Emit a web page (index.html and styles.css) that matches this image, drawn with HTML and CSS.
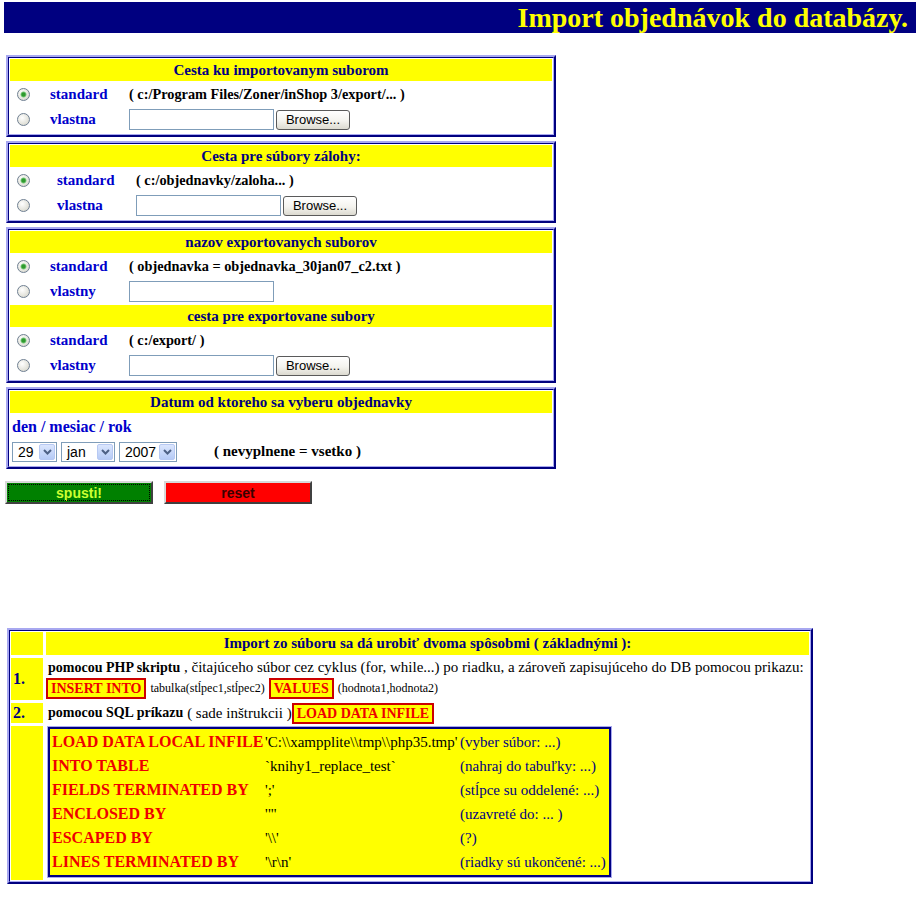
FILE: index.html
```html
<!DOCTYPE html>
<html lang="sk">
<head>
<meta charset="utf-8">
<title>Import objednávok do databázy.</title>
<link rel="stylesheet" href="styles.css">
</head>
<body>
<div class="title">Import objednávok do databázy.</div>

<div class="box">
  <div class="in">
    <div class="cap">Cesta ku importovanym suborom</div>
    <div class="row c1"><input type="radio" class="rb" name="a" checked><span class="lbl">standard</span><span class="val">( c:/Program Files/Zoner/inShop 3/export/... )</span></div>
    <div class="row c1"><input type="radio" class="rb" name="a"><span class="lbl">vlastna</span><span class="val"><input type="text" class="txt"><button class="browse">Browse...</button></span></div>
  </div>
</div>

<div class="box">
  <div class="in">
    <div class="cap">Cesta pre súbory zálohy:</div>
    <div class="row c2"><input type="radio" class="rb" name="b" checked><span class="lbl">standard</span><span class="val">( c:/objednavky/zaloha... )</span></div>
    <div class="row c2"><input type="radio" class="rb" name="b"><span class="lbl">vlastna</span><span class="val"><input type="text" class="txt"><button class="browse">Browse...</button></span></div>
  </div>
</div>

<div class="box">
  <div class="in">
    <div class="cap">nazov exportovanych suborov</div>
    <div class="row c1"><input type="radio" class="rb" name="c" checked><span class="lbl">standard</span><span class="val">( objednavka = objednavka_30jan07_c2.txt )</span></div>
    <div class="row c1"><input type="radio" class="rb" name="c"><span class="lbl">vlastny</span><span class="val"><input type="text" class="txt"></span></div>
    <div class="cap">cesta pre exportovane subory</div>
    <div class="row c1"><input type="radio" class="rb" name="d" checked><span class="lbl">standard</span><span class="val">( c:/export/ )</span></div>
    <div class="row c1"><input type="radio" class="rb" name="d"><span class="lbl">vlastny</span><span class="val"><input type="text" class="txt"><button class="browse">Browse...</button></span></div>
  </div>
</div>

<div class="box">
  <div class="in">
    <div class="cap">Datum od ktoreho sa vyberu objednavky</div>
    <div class="drow lbl">den / mesiac / rok</div>
    <div class="drow sels">
      <span class="sel w1"><span>29</span><span class="arr"><svg width="9" height="6" viewBox="0 0 9 6"><path d="M1 1 L4.5 4.5 L8 1" fill="none" stroke="#4d6185" stroke-width="2"/></svg></span></span>
      <span class="sel w2"><span>jan</span><span class="arr"><svg width="9" height="6" viewBox="0 0 9 6"><path d="M1 1 L4.5 4.5 L8 1" fill="none" stroke="#4d6185" stroke-width="2"/></svg></span></span>
      <span class="sel w3"><span>2007</span><span class="arr"><svg width="9" height="6" viewBox="0 0 9 6"><path d="M1 1 L4.5 4.5 L8 1" fill="none" stroke="#4d6185" stroke-width="2"/></svg></span></span>
      <span class="note">( nevyplnene = vsetko )</span>
    </div>
  </div>
</div>

<div class="actions">
  <button class="act go">spusti!</button>
  <button class="act rst">reset</button>
</div>

<div class="bt">
  <div class="btin">
    <div class="n"></div>
    <div class="hcap">Import zo súboru sa dá urobiť dvoma spôsobmi ( základnými ):</div>

    <div class="n">1.</div>
    <div class="c">
      <div class="l1"><b>pomocou PHP skriptu</b> , čitajúceho súbor cez cyklus (for, while...) po riadku, a zároveň zapisujúceho do DB pomocou prikazu:</div>
      <div class="l2"><span class="kw first">INSERT INTO</span> <span class="sm">tabulka(stĺpec1,stĺpec2)</span> <span class="kw">VALUES</span> <span class="sm">(hodnota1,hodnota2)</span></div>
    </div>

    <div class="n">2.</div>
    <div class="c r2"><b>pomocou SQL príkazu</b> ( sade inštrukcii )<span class="kw">LOAD DATA INFILE</span></div>

    <div class="n"></div>
    <div class="c">
      <div class="sql">
        <span class="k">LOAD DATA LOCAL INFILE</span><span class="v">'C:\\xampplite\\tmp\\php35.tmp'</span><span class="cm">(vyber súbor: ...)</span>
        <span class="k">INTO TABLE</span><span class="v">`knihy1_replace_test`</span><span class="cm">(nahraj do tabuľky: ...)</span>
        <span class="k">FIELDS TERMINATED BY</span><span class="v">';'</span><span class="cm">(stĺpce su oddelené: ...)</span>
        <span class="k">ENCLOSED BY</span><span class="v">'"'</span><span class="cm">(uzavreté do: ... )</span>
        <span class="k">ESCAPED BY</span><span class="v">'\\'</span><span class="cm">(?)</span>
        <span class="k">LINES TERMINATED BY</span><span class="v">'\r\n'</span><span class="cm">(riadky sú ukončené: ...)</span>
      </div>
    </div>
  </div>
</div>
</body>
</html>
```

FILE: styles.css
```css
body {
  margin: 2px 0 20px 4px;
  background: #ffffff;
  font-family: "Liberation Serif", "Times New Roman", serif;
  color: #000;
}

.title {
  background: #000080;
  color: #ffff00;
  height: 31px;
  font-weight: bold;
  font-size: 28px;
  line-height: 31px;
  text-align: right;
  padding-right: 8px;
  margin-bottom: 22px;
  white-space: nowrap;
}

.box {
  width: 550px;
  box-sizing: border-box;
  margin: 0 0 4px 2px;
  border: 2px solid;
  border-color: #a8a8f0 #000080 #000080 #a8a8f0;
}

.in {
  border: 1px solid;
  border-color: #000080 #a8a8f0 #a8a8f0 #000080;
  padding: 1px 1px 3px;
  display: flex;
  flex-direction: column;
  gap: 2px;
}

.cap {
  background: #ffff00;
  height: 22px;
  line-height: 22px;
  text-align: center;
  color: #000080;
  font-weight: bold;
  font-size: 15px;
}

.row {
  display: grid;
  align-items: center;
  height: 23px;
  font-weight: bold;
  font-size: 15px;
}

.c1 { grid-template-columns: 40px 79px 1fr; }
.c2 { grid-template-columns: 47px 79px 1fr; }

.rb {
  -webkit-appearance: none;
  appearance: none;
  width: 13px;
  height: 13px;
  margin: 0 0 0 7px;
  box-sizing: border-box;
  border: 1px solid #6f7f92;
  border-radius: 50%;
  background: radial-gradient(circle at 38% 35%, #ffffff, #e4e4dc 60%, #c9c9c0);
}

.rb:checked {
  background:
    radial-gradient(circle, #2f9a2f 0 1.6px, #7fcb7f 2.6px, rgba(255,255,255,0) 3.4px),
    radial-gradient(circle at 38% 35%, #ffffff, #e4e4dc 60%, #c9c9c0);
}

.lbl {
  color: #0000cc;
  font-weight: bold;
}

.val {
  display: flex;
  align-items: center;
  gap: 2px;
  color: #000;
  font-size: 14.3px;
  white-space: nowrap;
}

.txt {
  width: 145px;
  height: 21px;
  box-sizing: border-box;
  border: 1px solid #7f9db9;
  margin: 0;
  padding: 0 2px;
  background: #fff;
}

.browse {
  width: 74px;
  height: 20px;
  box-sizing: border-box;
  margin: 0;
  padding: 0;
  border: 1px solid #5a5a5a;
  border-radius: 3px;
  background: linear-gradient(#ffffff, #f4f3ee 55%, #dcdad0);
  font-family: "Liberation Sans", Arial, sans-serif;
  font-size: 13px;
  color: #000;
}

.drow {
  height: 23px;
  display: flex;
  align-items: center;
  padding-left: 2px;
  font-size: 16px;
}

.sels { gap: 4px; }

.sel {
  height: 20px;
  box-sizing: border-box;
  border: 1px solid #7f9db9;
  background: #fff;
  display: inline-flex;
  align-items: center;
  justify-content: space-between;
  padding: 0 1px 0 5px;
  font-family: "Liberation Sans", Arial, sans-serif;
  font-size: 14px;
}

.w1 { width: 45px; }
.w2 { width: 54px; }
.w3 { width: 58px; }

.arr {
  width: 16px;
  height: 16px;
  box-sizing: border-box;
  border: 1px solid #b7c9f3;
  border-radius: 2px;
  background: linear-gradient(#dbe6fd, #b6cbf6);
  display: flex;
  align-items: center;
  justify-content: center;
}

.note {
  margin-left: 33px;
  font-weight: bold;
  font-size: 15px;
}

.actions {
  display: flex;
  gap: 11px;
  margin: 12px 0 0 1px;
}

.act {
  width: 148px;
  height: 23px;
  box-sizing: border-box;
  margin: 0;
  padding: 0;
  border: 2px solid;
  border-color: #d8d8d8 #404040 #404040 #d8d8d8;
  font-family: "Liberation Sans", Arial, sans-serif;
  font-weight: bold;
  font-size: 14px;
}

.go {
  background: #008000;
  color: #ccff33;
  outline: 1px dotted #000;
  outline-offset: -4px;
}

.rst {
  background: #ff0000;
  color: #3a0000;
}

.bt {
  width: 806px;
  box-sizing: border-box;
  margin: 124px 0 0 3px;
  border: 2px solid;
  border-color: #a8a8f0 #000080 #000080 #a8a8f0;
}

.btin {
  border: 1px solid;
  border-color: #000080 #a8a8f0 #a8a8f0 #000080;
  padding: 1px;
  display: grid;
  grid-template-columns: 32px 1fr;
  gap: 3px;
}

.n {
  background: #ffff00;
  color: #000080;
  font-weight: bold;
  font-size: 16px;
  display: flex;
  align-items: center;
  padding-left: 2px;
}

.hcap {
  background: #ffff00;
  color: #000080;
  font-weight: bold;
  font-size: 15px;
  height: 23px;
  line-height: 23px;
  text-align: center;
}

.c {
  padding-left: 2px;
  font-size: 15px;
}

.c b {
  font-size: 14px;
}

.l1 {
  line-height: 19px;
  white-space: nowrap;
}

.l2 {
  display: flex;
  align-items: center;
  gap: 4px;
  height: 23px;
}

.r2 {
  display: flex;
  align-items: center;
  height: 20px;
  white-space: pre;
}

.kw {
  display: inline-block;
  border: 2px solid #cc0000;
  background: #ffff00;
  color: #ee0000;
  font-weight: bold;
  font-size: 14px;
  line-height: 17px;
  padding: 0 3px;
}

.first {
  margin-left: -2px;
}

.sm {
  font-size: 12px;
}

.sql {
  width: 563px;
  box-sizing: border-box;
  margin: 1px 0 3px;
  border: 2px solid #000080;
  box-shadow: 0 0 0 1px #a8a8f0;
  background: #ffff00;
  display: grid;
  grid-template-columns: 213px 195px 1fr;
  padding: 1px 0 1px 2px;
}

.sql span {
  height: 24px;
  line-height: 24px;
  white-space: nowrap;
}

.k {
  color: #ee0000;
  font-weight: bold;
  font-size: 16px;
}

.v {
  color: #000;
  font-size: 15px;
}

.cm {
  color: #000080;
  font-size: 15px;
}
```
